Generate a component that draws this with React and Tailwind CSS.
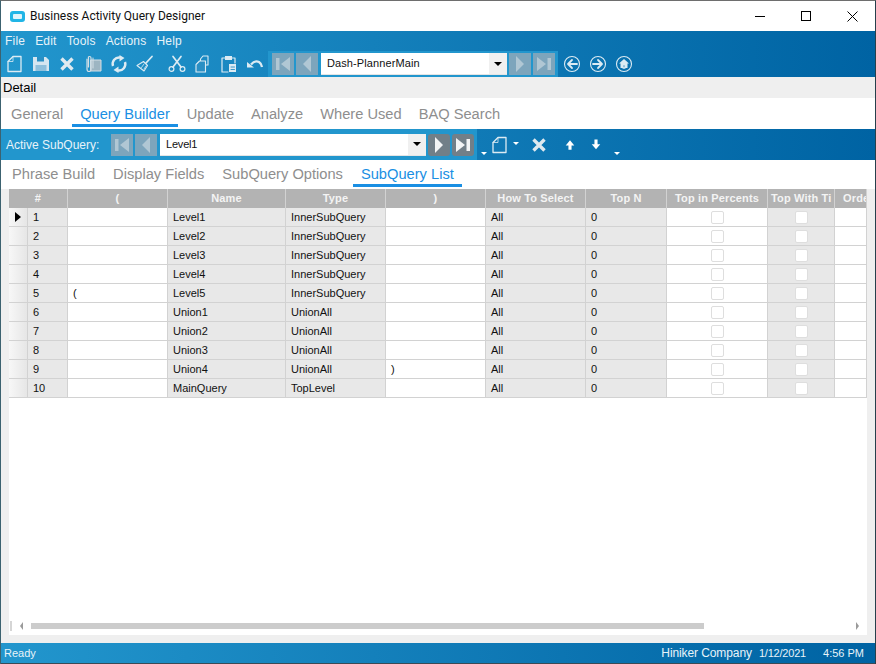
import React from 'react';

const columns = [
  { title: '#', width: 'w-[40px]', grey: true },
  { title: '(', width: 'w-[100px]' },
  { title: 'Name', width: 'w-[118px]', grey: true },
  { title: 'Type', width: 'w-[100px]', grey: true },
  { title: ')', width: 'w-[100px]' },
  { title: 'How To Select', width: 'w-[100px]', grey: true },
  { title: 'Top N', width: 'w-[81px]', grey: true },
  { title: 'Top in Percents', width: 'w-[101px]' },
  { title: 'Top With Ti', width: 'w-[67px]', grey: true },
  { title: 'Orde', width: 'w-[32px]' },
];

const rows = [
  ['1', '', 'Level1', 'InnerSubQuery', ''],
  ['2', '', 'Level2', 'InnerSubQuery', ''],
  ['3', '', 'Level3', 'InnerSubQuery', ''],
  ['4', '', 'Level4', 'InnerSubQuery', ''],
  ['5', '(', 'Level5', 'InnerSubQuery', ''],
  ['6', '', 'Union1', 'UnionAll', ''],
  ['7', '', 'Union2', 'UnionAll', ''],
  ['8', '', 'Union3', 'UnionAll', ''],
  ['9', '', 'Union4', 'UnionAll', ')'],
  ['10', '', 'MainQuery', 'TopLevel', ''],
];

const Svg = ({ w = 18, h = 18, children }) => (
  <svg width={w} height={h} viewBox="0 0 18 18" className="shrink-0 block" fill="none" stroke="#dcebf3" strokeWidth="1.3" strokeLinejoin="round" strokeLinecap="round">
    {children}
  </svg>
);

const NewIcon = () => <Svg><path d="M7 1.500h8v15H2V6.500z" /><path d="M7 1.500v5H2" strokeWidth="0.8" /></Svg>;
const SaveIcon = () => (
  <Svg>
    <path d="M1 2h13l3 3v11H1z" fill="#d5e6f0" stroke="none" />
    <rect x="5" y="2" width="7" height="4.500" fill="#2a8fc4" stroke="none" />
    <rect x="3.500" y="10" width="11" height="6" fill="#8fc0dc" stroke="none" />
  </Svg>
);
const CrossIcon = () => <Svg><path d="M3.500 3.500l11 11M14.500 3.500l-11 11" strokeWidth="3.400" stroke="#dfe9ef" strokeLinecap="butt" /></Svg>;
const ClipIcon = () => (
  <Svg>
    <rect x="7" y="5" width="10" height="11" fill="#9db5c2" stroke="#d4dfe6" strokeWidth="1" />
    <path d="M3 4v10q0 2.500 2 2.500t2-2.500V3q0-1.500-1.500-1.500T4.500 3v9" stroke="#d4dfe6" strokeWidth="1.200" />
    <path d="M9 3v10" stroke="#d4dfe6" strokeWidth="1" />
  </Svg>
);
const RefreshIcon = () => (
  <Svg>
    <path d="M3 11a6.500 6.500 0 0 1 7-8.500" strokeWidth="2.400" strokeLinecap="butt" />
    <path d="M15 7a6.500 6.500 0 0 1-7 8.500" strokeWidth="2.400" strokeLinecap="butt" />
    <path d="M9.500 0l5 3-5 3.500zM8.500 18l-5-3 5-3.500z" fill="#dcebf3" stroke="none" />
  </Svg>
);
const BroomIcon = () => (
  <Svg>
    <path d="M10 8l6-6.500" strokeWidth="1.800" />
    <path d="M7.500 6.500l4 4-3.500 5.500-7-5.500z" strokeWidth="1.100" />
    <path d="M5.500 12.500l2.500-3.500M8 14l2-3" strokeWidth="0.800" />
  </Svg>
);
const ScissorsIcon = () => (
  <Svg>
    <circle cx="3.500" cy="14" r="2.400" strokeWidth="1.200" />
    <circle cx="14.500" cy="14" r="2.400" strokeWidth="1.200" />
    <path d="M5 12L13 1.500M13 12L5 1.500" strokeWidth="1.700" />
  </Svg>
);
const CopyIcon = () => (
  <Svg>
    <path d="M9 1h5v9H6.500V4z" strokeWidth="1.100" />
    <path d="M5.500 6h6v11H2V9.500z" fill="#2a8fc4" strokeWidth="1.100" />
  </Svg>
);
const PasteIcon = () => (
  <Svg>
    <path d="M5 3H2v14h6M12 3h3v5" strokeWidth="1.200" />
    <rect x="5" y="1" width="7" height="4" fill="#dcebf3" stroke="none" />
    <path d="M9 9h7v8H9z" fill="#dcebf3" stroke="none" />
    <path d="M11 12h3.500M11 14.500h3.500" stroke="#2a8fc4" strokeWidth="0.900" />
  </Svg>
);
const UndoIcon = () => (
  <Svg>
    <path d="M5 9.500q4-4.500 8-2.500 2.500 1.500 3 5" strokeWidth="2.300" strokeLinecap="butt" />
    <path d="M1 7l7 5.500H1z" fill="#dcebf3" stroke="none" />
  </Svg>
);
const ArrowCircle = ({ dir }) => (
  <Svg>
    <circle cx="9" cy="9" r="7.500" strokeWidth="1.100" />
    {dir === 'left' ? (
      <path d="M14 9H6M9 5L5 9l4 4" strokeWidth="1.800" />
    ) : (
      <path d="M4 9h8M9 5l4 4-4 4" strokeWidth="1.800" />
    )}
  </Svg>
);
const HomeCircle = () => (
  <Svg>
    <circle cx="9" cy="9" r="7.500" strokeWidth="1.100" />
    <path d="M9 4L4 8.500h1.500V13h7V8.500H14z" fill="#dcebf3" stroke="none" />
    <rect x="8" y="9.500" width="2" height="3.500" fill="#0f73ae" />
  </Svg>
);
const UpArrow = () => <Svg w={14} h={14}><path d="M9 3l5.500 6.500h-3.500V15H7V9.500H3.500z" fill="#fff" stroke="none" /></Svg>;
const DownArrow = () => <Svg w={14} h={14}><path d="M7 2h4v6h3.500L9 14.500 3.500 8H7z" fill="#fff" stroke="none" /></Svg>;

const NavGlyph = ({ type, fill }) => {
  const shapes = {
    first: <><rect x="2" y="3" width="3.500" height="12" /><path d="M16 2v14L7 9z" /></>,
    prev: <path d="M13 1v16L5 9z" />,
    next: <path d="M5 1v16l8-8z" />,
    last: <><path d="M2 2v14l9-7z" /><rect x="12.500" y="3" width="3.500" height="12" /></>,
  };
  return (
    <svg width="18" height="18" viewBox="0 0 18 18" className="block" fill={fill}>
      {shapes[type]}
    </svg>
  );
};

const NavButton = ({ type, on }) => (
  <div className={`w-[22px] h-[22px] flex items-center justify-center ${on ? 'bg-[#717f88] rounded-[3px]' : 'bg-[#7da5bc]'}`}>
    <NavGlyph type={type} fill={on ? '#f2f4f5' : '#b0c7d4'} />
  </div>
);

const Combo = ({ text, width, textClass }) => (
  <div className={`${width} h-[22px] bg-white flex items-center justify-between ml-[1px] border-b border-[#e5e5e5]`}>
    <span className={`${textClass} text-[#111]`}>{text}</span>
    <div className="w-[18px] h-full bg-[#f0f0f0] flex items-center justify-center">
      <div className="w-0 h-0 border-x-[4px] border-x-transparent border-t-[4px] border-t-black" />
    </div>
  </div>
);

const Caret = ({ offset }) => (
  <div className={`w-0 h-0 border-x-[3px] border-x-transparent border-t-[3px] border-t-white ${offset}`} />
);

const Tab = ({ label, active, box }) => (
  <div className={`${box} px-[8px] border-b-[3px] ${active ? 'border-[#1a8fe3] text-[#1a8fe3]' : 'border-transparent text-[#8e8e8e]'}`}>
    {label}
  </div>
);

const Cell = ({ col, children }) => (
  <div className={`${col.width} shrink-0 h-[19px] border-r border-b border-[#d2d2d2] flex items-center pl-[5px] text-[11px] text-[#111] ${col.grey ? 'bg-[#e8e8e8]' : 'bg-white'}`}>
    {children}
  </div>
);

const Check = () => (
  <div className="w-[13px] h-[13px] bg-white border border-[#dedede] rounded-[2px] mx-auto -translate-x-[2px]" />
);

const headerAlign = (i) => {
  if (i === 8) return 'items-start pl-[3px] pt-[1px]';
  if (i === 9) return 'items-center pl-[8px]';
  return 'items-center justify-center';
};

export default function App() {
  const mainBox = 'h-[29px] pt-[5px]';
  const subBox = 'h-[27px] pt-[3px]';
  return (
    <div className="w-[876px] h-[664px] flex flex-col bg-[#efefef] border-t border-t-[#6e6e6e] border-l border-l-[#3c6270] border-r border-r-[#26404c] overflow-hidden font-['Liberation_Sans',sans-serif]">
      <div className="h-[30px] shrink-0 bg-white flex items-center">
        <div className="ml-[9px] w-[15px] h-[11px] rounded-[3px] bg-[#21b5e6] flex items-center justify-center">
          <div className="w-[9px] h-[5px] rounded-[1px] bg-[#dff4fb]" />
        </div>
        <span className="ml-[5px] text-[12px] text-[#111] font-['Roboto',sans-serif]">Business Activity Query Designer</span>
        <div className="ml-auto flex items-center">
          <div className="w-[46px] h-[30px] flex items-center justify-center">
            <div className="w-[10px] h-px bg-black" />
          </div>
          <div className="w-[46px] h-[30px] flex items-center justify-center">
            <div className="w-[10px] h-[10px] border border-black" />
          </div>
          <div className="w-[46px] h-[30px] flex items-center justify-center">
            <svg width="11" height="11" viewBox="0 0 11 11" stroke="#000" strokeWidth="1"><path d="M.5.5l10 10M10.500.5l-10 10" /></svg>
          </div>
        </div>
      </div>

      <div className="h-[46px] shrink-0 bg-gradient-to-r from-[#2296cd] to-[#0063a3] flex flex-col">
        <div className="h-[20px] flex items-center gap-[10px] pl-[4px] text-[12px] tracking-[0.2px] text-[#e8f3f9]">
          <span>File</span><span>Edit</span><span>Tools</span><span>Actions</span><span>Help</span>
        </div>
        <div className="h-[26px] flex items-center">
          <div className="flex items-center gap-[8px] pl-[5px]"><NewIcon /><SaveIcon /><CrossIcon /><ClipIcon /><RefreshIcon /><BroomIcon /></div>
          <div className="flex items-center gap-[8px] ml-[14px]"><ScissorsIcon /><CopyIcon /><PasteIcon /><UndoIcon /></div>
          <div className="ml-[4px] h-[26px] w-[290px] bg-[#2296cd] flex items-center pl-[4px] gap-[2px]">
            <NavButton type="first" /><NavButton type="prev" />
            <Combo text="Dash-PlannerMain" width="w-[186px]" textClass="pl-[6px] text-[11px] tracking-[0.1px]" />
            <NavButton type="next" /><NavButton type="last" />
          </div>
          <div className="flex items-center gap-[8px] ml-[5px]"><ArrowCircle dir="left" /><ArrowCircle dir="right" /><HomeCircle /></div>
        </div>
      </div>

      <div className="h-[21px] shrink-0 pl-[2px] flex items-center text-[13px] text-black">Detail</div>

      <div className="h-[31px] shrink-0 bg-white flex items-start gap-[1px] pl-[2px] text-[14.67px]">
        <Tab box={mainBox} label="General" />
        <Tab box={mainBox} label="Query Builder" active />
        <Tab box={mainBox} label="Update" />
        <Tab box={mainBox} label="Analyze" />
        <Tab box={mainBox} label="Where Used" />
        <Tab box={mainBox} label="BAQ Search" />
      </div>

      <div className="h-[31px] shrink-0 bg-gradient-to-r from-[#2296cd] to-[#0063a3] flex items-center">
        <div className="h-full w-[476px] bg-[#2296cd] flex items-center">
          <span className="ml-[5px] w-[105px] text-[12px] text-[#e8f3f9]">Active SubQuery:</span>
          <div className="flex items-center gap-[2px]">
            <NavButton type="first" /><NavButton type="prev" />
            <Combo text="Level1" width="w-[266px]" textClass="pl-[6px] text-[11px] tracking-[-0.2px]" />
            <NavButton type="next" on /><NavButton type="last" on />
          </div>
        </div>
        <Caret offset="ml-[4px] mt-[18px]" />
        <div className="ml-[4px]"><NewIcon /></div>
        <Caret offset="ml-[4px] -mt-[2px]" />
        <div className="ml-[11px]"><CrossIcon /></div>
        <div className="ml-[15px]"><UpArrow /></div>
        <div className="ml-[12px]"><DownArrow /></div>
        <Caret offset="ml-[11px] mt-[18px]" />
      </div>

      <div className="h-[29px] shrink-0 bg-white flex items-start gap-[2px] pl-[3px] text-[14.67px]">
        <Tab box={subBox} label="Phrase Build" />
        <Tab box={subBox} label="Display Fields" />
        <Tab box={subBox} label="SubQuery Options" />
        <Tab box={subBox} label="SubQuery List" active />
      </div>

      <div className="flex-1 bg-white mx-[8px] flex flex-col overflow-hidden">
        <div className="flex">
          <div className="w-[19px] shrink-0 h-[19px] bg-[#b3b3b3] border-b border-[#d2d2d2]" />
          {columns.map((col, i) => (
            <div key={col.title} className={`${col.width} shrink-0 h-[19px] bg-[#b3b3b3] border-r border-[#d2d2d2] flex text-[11px] font-bold tracking-[0.15px] text-[#f4f4f4] overflow-hidden whitespace-nowrap ${headerAlign(i)} ${i === 0 ? '-ml-[19px] !w-[59px]' : ''}`}>
              {col.title}
            </div>
          ))}
        </div>
        {rows.map((row, r) => (
          <div key={row[0]} className="flex">
            <div className="w-[19px] shrink-0 h-[19px] bg-gradient-to-r from-[#f7f7f7] to-[#e6e6e6] border-r border-b border-[#d2d2d2] flex items-center justify-center">
              {r === 0 && <div className="w-0 h-0 border-y-[5px] border-y-transparent border-l-[6px] border-l-black" />}
            </div>
            {row.map((text, i) => (
              <Cell key={i} col={columns[i]}>{text}</Cell>
            ))}
            <Cell col={columns[5]}>All</Cell>
            <Cell col={columns[6]}>0</Cell>
            <Cell col={columns[7]}><Check /></Cell>
            <Cell col={columns[8]}><Check /></Cell>
            <Cell col={columns[9]}></Cell>
          </div>
        ))}
        <div className="mt-auto mb-[5px] h-[8px] flex items-center pl-[1px] pr-[8px]">
          <div className="w-[2px] h-[10px] bg-[#d5d5d5]" />
          <div className="ml-[8px] w-0 h-0 border-y-[4px] border-y-transparent border-r-[3px] border-r-[#9a9a9a]" />
          <div className="ml-[8px] w-[673px] h-[6px] bg-[#cccccc]" />
          <div className="ml-auto w-0 h-0 border-y-[4px] border-y-transparent border-l-[3px] border-l-[#9a9a9a]" />
        </div>
      </div>

      <div className="h-[8px] shrink-0" />

      <div className="h-[20px] shrink-0 bg-gradient-to-r from-[#2296cd] to-[#0063a3] flex items-center pl-[3px] text-[11px] text-[#e8f3f9]">
        <span>Ready</span>
        <span className="ml-auto text-[12px] tracking-[-0.1px]">Hiniker Company</span>
        <span className="ml-[7px] tracking-[-0.2px]">1/12/2021</span>
        <span className="ml-[17px] mr-[11px]">4:56 PM</span>
      </div>
      <div className="h-px shrink-0 bg-[#3b4a55]" />
    </div>
  );
}
